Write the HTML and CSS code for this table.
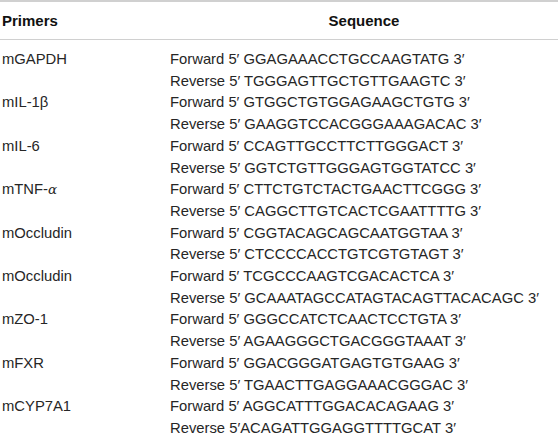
FILE: index.html
```html
<!DOCTYPE html>
<html>
<head>
<meta charset="utf-8">
<link rel="stylesheet" href="styles.css">
</head>
<body>
<table class="primers">
  <thead>
    <tr><th class="col-name">Primers</th><th class="col-seq">Sequence</th></tr>
  </thead>
  <tbody>
    <tr class="first"><td>mGAPDH</td><td>Forward 5′ GGAGAAACCTGCCAAGTATG 3′</td></tr>
    <tr><td></td><td>Reverse 5′ TGGGAGTTGCTGTTGAAGTC 3′</td></tr>
    <tr><td>mIL-1β</td><td>Forward 5′ GTGGCTGTGGAGAAGCTGTG 3′</td></tr>
    <tr><td></td><td>Reverse 5′ GAAGGTCCACGGGAAAGACAC 3′</td></tr>
    <tr><td>mIL-6</td><td>Forward 5′ CCAGTTGCCTTCTTGGGACT 3′</td></tr>
    <tr><td></td><td>Reverse 5′ GGTCTGTTGGGAGTGGTATCC 3′</td></tr>
    <tr><td>mTNF-<span class="greek">α</span></td><td>Forward 5′ CTTCTGTCTACTGAACTTCGGG 3′</td></tr>
    <tr><td></td><td>Reverse 5′ CAGGCTTGTCACTCGAATTTTG 3′</td></tr>
    <tr><td>mOccludin</td><td>Forward 5′ CGGTACAGCAGCAATGGTAA 3′</td></tr>
    <tr><td></td><td>Reverse 5′ CTCCCCACCTGTCGTGTAGT 3′</td></tr>
    <tr><td>mOccludin</td><td>Forward 5′ TCGCCCAAGTCGACACTCA 3′</td></tr>
    <tr><td></td><td>Reverse 5′ GCAAATAGCCATAGTACAGTTACACAGC 3′</td></tr>
    <tr><td>mZO-1</td><td>Forward 5′ GGGCCATCTCAACTCCTGTA 3′</td></tr>
    <tr><td></td><td>Reverse 5′ AGAAGGGCTGACGGGTAAAT 3′</td></tr>
    <tr><td>mFXR</td><td>Forward 5′ GGACGGGATGAGTGTGAAG 3′</td></tr>
    <tr><td></td><td>Reverse 5′ TGAACTTGAGGAAACGGGAC 3′</td></tr>
    <tr><td>mCYP7A1</td><td>Forward 5′ AGGCATTTGGACACAGAAG 3′</td></tr>
    <tr class="last"><td></td><td>Reverse 5′ACAGATTGGAGGTTTTGCAT 3′</td></tr>
  </tbody>
</table>
</body>
</html>
```
FILE: styles.css
```css
html, body {
  margin: 0;
  padding: 0;
  background: #fff;
}
.primers {
  width: 558px;
  border-collapse: collapse;
  font-family: "Liberation Sans", Arial, sans-serif;
  font-size: 14.8px;
  color: #262626;
  border-top: 2px solid #d0d0d0;
  border-bottom: 2px solid #d0d0d0;
}
.primers th {
  font-weight: bold;
  font-size: 15px;
  color: #111;
  height: 37px;
  padding: 0;
  border-bottom: 1.5px solid #d0d0d0;
}
.primers th.col-name {
  text-align: left;
  padding-left: 2px;
  width: 168px;
}
.primers th.col-seq {
  text-align: center;
}
.primers td {
  padding: 0;
  height: 21.7px;
  line-height: 21.7px;
  white-space: nowrap;
  vertical-align: middle;
}
.primers td:first-child {
  padding-left: 2px;
}
.primers tr.first td {
  padding-top: 9px;
}
.primers tr.last td {
  padding-bottom: 8px;
}
.greek {
  font-family: "DejaVu Serif", serif;
  font-style: italic;
  font-size: 13.5px;
}
```
